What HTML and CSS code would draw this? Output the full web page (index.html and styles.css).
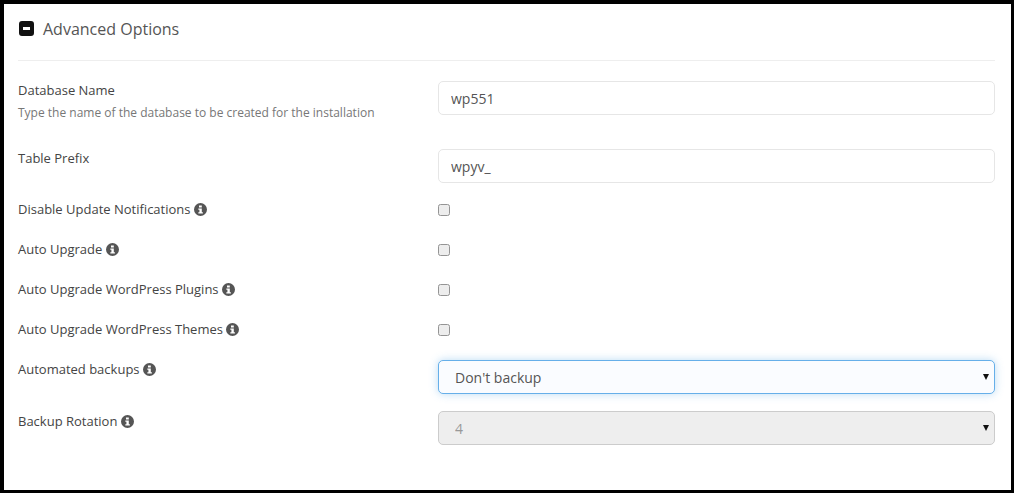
FILE: index.html
```html
<!DOCTYPE html>
<html lang="en">
<head>
<meta charset="utf-8">
<title>Advanced Options</title>
<link rel="stylesheet" href="styles.css">
</head>
<body>
<svg class="defs" width="0" height="0" aria-hidden="true">
  <symbol id="info" viewBox="0 0 12 12">
    <path fill-rule="evenodd" d="M6 0a6 6 0 1 1 0 12A6 6 0 0 1 6 0zM4.6 2.2v1.9h2.6V2.2zM4 5v1.2h1v2.3H4v1.3h4.2V8.5H7.2V5z"/>
  </symbol>
</svg>
<main class="panel">
  <header class="head">
    <svg class="toggle" viewBox="0 0 15 15" aria-hidden="true">
      <path fill-rule="evenodd" d="M3 0h9a3 3 0 0 1 3 3v9a3 3 0 0 1-3 3H3a3 3 0 0 1-3-3V3a3 3 0 0 1 3-3zM4 6v3h7V6z"/>
    </svg>
    <h2 class="title">Advanced Options</h2>
  </header>
  <form class="form">
    <div class="row row-db">
      <div class="label"><label class="name">Database Name</label><p class="hint">Type the name of the database to be created for the installation</p></div>
      <input class="field" type="text" value="wp551">
    </div>
    <div class="row row-prefix">
      <div class="label"><label class="name">Table Prefix</label></div>
      <input class="field" type="text" value="wpyv_">
    </div>
    <div class="row row-check">
      <label class="name">Disable Update Notifications <svg class="info"><use href="#info"/></svg></label>
      <input class="check" type="checkbox">
    </div>
    <div class="row row-check">
      <label class="name">Auto Upgrade <svg class="info"><use href="#info"/></svg></label>
      <input class="check" type="checkbox">
    </div>
    <div class="row row-check">
      <label class="name">Auto Upgrade WordPress Plugins <svg class="info"><use href="#info"/></svg></label>
      <input class="check" type="checkbox">
    </div>
    <div class="row row-check">
      <label class="name">Auto Upgrade WordPress Themes <svg class="info"><use href="#info"/></svg></label>
      <input class="check" type="checkbox">
    </div>
    <div class="row row-select row-backup">
      <div class="label"><label class="name">Automated backups <svg class="info"><use href="#info"/></svg></label></div>
      <div class="select-wrap"><select class="field select focus"><option>Don't backup</option></select></div>
    </div>
    <div class="row row-select">
      <div class="label label-low"><label class="name">Backup Rotation <svg class="info"><use href="#info"/></svg></label></div>
      <div class="select-wrap"><select class="field select" disabled><option>4</option></select></div>
    </div>
  </form>
</main>
</body>
</html>
```
FILE: styles.css
```css
* { box-sizing: border-box; }
html, body { margin: 0; padding: 0; height: 493px; overflow: hidden; background: #000; }
body { font-family: "Open Sans", sans-serif; color: #555; }
.defs { display: block; height: 0; }
.panel {
  margin: 4px 3px 3px 4px;
  height: 486px;
  background: #fff;
  padding: 0 16px 0 14px;
}
.head {
  display: flex;
  align-items: center;
  height: 57px;
  padding: 0 0 7px 1px;
  border-bottom: 1px solid #eee;
}
.toggle { width: 15px; height: 15px; fill: #111; flex: none; }
.title { margin: 0 0 0 9px; font-size: 16px; font-weight: 400; line-height: 22px; color: #555; }
.form { padding-top: 20px; }
.row { display: flex; align-items: flex-start; }
.row-db { height: 68px; }
.row-prefix { height: 41px; }
.row-check { height: 40px; align-items: center; }
.row-select { height: 51px; }
.row-backup { margin-top: 10px; }
.row-check .name { flex: 0 0 420px; padding-bottom: 2px; }
.label { flex: 0 0 420px; }
.label-low { padding-top: 1px; }
.name { display: block; font-size: 13px; line-height: 18px; font-weight: 400; color: #444; }
.hint { margin: 6px 0 0; font-size: 12px; line-height: 16px; color: #777; }
.info { width: 13px; height: 13px; fill: #555; vertical-align: -2px; }
.field {
  display: block;
  width: 557px;
  height: 34px;
  margin: 0;
  padding: 0 12px;
  border: 1px solid #e6e6e6;
  border-radius: 5px;
  background: #fff;
  font: 14px "Open Sans", sans-serif;
  color: #555;
  outline: none;
}
.check {
  appearance: none;
  margin: 0;
  width: 12px;
  height: 12px;
  flex: none;
  border: 1px solid #949494;
  border-radius: 2.5px;
  background: #ededed;
}
.select-wrap { position: relative; width: 557px; }
.select-wrap::after {
  content: "";
  position: absolute;
  right: 6px;
  top: 14px;
  border-top: 6px solid #111;
  border-left: 3.5px solid transparent;
  border-right: 3.5px solid transparent;
  pointer-events: none;
}
.select { appearance: none; padding-left: 16px; opacity: 1; }
.select:disabled { background: #eee; border-color: #ccc; color: #999; }
.focus {
  border-color: #66afe9;
  background: #fafcff;
  box-shadow: 0 0 8px rgba(102, 175, 233, .45);
}
```
